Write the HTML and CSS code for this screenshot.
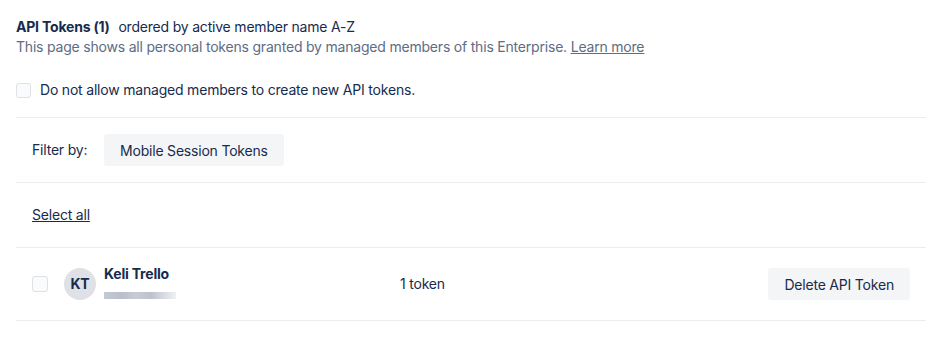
FILE: index.html
```html
<!DOCTYPE html>
<html lang="en">
<head>
    <meta charset="UTF-8">
    <meta name="viewport" content="width=device-width, initial-scale=1.0">
    <title>API Tokens</title>
    <link rel="stylesheet" href="styles.css">
</head>
<body>
    <div class="container">
        <div class="header">
            <div class="title"><strong>API Tokens (1)</strong> ordered by active member name A-Z</div>
            <div class="description">This page shows all personal tokens granted by managed members of this Enterprise. <a href="#">Learn more</a></div>
        </div>

        <label class="restrict">
            <span class="checkbox"></span>
            Do not allow managed members to create new API tokens.
        </label>

        <div class="section filter-row">
            <span class="filter-label">Filter by:</span>
            <button class="btn">Mobile Session Tokens</button>
        </div>

        <div class="section select-row">
            <a href="#">Select all</a>
        </div>

        <div class="section member-row">
            <div class="member">
                <span class="checkbox large"></span>
                <span class="avatar">KT</span>
                <div class="member-info">
                    <div class="member-name">Keli Trello</div>
                    <div class="member-email"></div>
                </div>
            </div>
            <div class="token-count">1 token</div>
            <button class="btn">Delete API Token</button>
        </div>
    </div>
</body>
</html>
```

FILE: styles.css
```css
body {
    margin: 0;
    font-family: Inter, "Noto Sans", sans-serif;
    font-size: 14px;
    line-height: 20px;
    letter-spacing: -0.2px;
    color: #172b4d;
    background-color: white;
}
.container {
    width: 910px;
    padding: 17px 0 0 16px;
}
a {
    color: #172b4d;
    text-decoration: underline;
}
.title strong {
    font-weight: 700;
    margin-right: 5px;
}
.description {
    color: #5e6c84;
}
.description a {
    color: #5e6c84;
}
.restrict {
    display: flex;
    align-items: center;
    gap: 9px;
    margin-top: 23px;
    padding-bottom: 17px;
    border-bottom: 1px solid #ebecf0;
}
.checkbox {
    display: inline-block;
    box-sizing: border-box;
    width: 15px;
    height: 15px;
    border: 1px solid #dfe1e6;
    border-radius: 3px;
    background-color: #fafbfc;
}
.checkbox.large {
    width: 16px;
    height: 16px;
}
.section {
    display: flex;
    align-items: center;
    border-bottom: 1px solid #ebecf0;
    padding: 0 16px;
}
.filter-row {
    padding-top: 16px;
    padding-bottom: 16px;
}
.filter-label {
    width: 72px;
}
.btn {
    height: 32px;
    padding: 0 16px;
    border: none;
    border-radius: 3px;
    background-color: #f4f5f7;
    color: #172b4d;
    font-family: inherit;
    font-size: 14px;
    letter-spacing: -0.2px;
}
.select-row {
    padding-top: 22px;
    padding-bottom: 22px;
}
.member-row {
    padding-top: 20px;
    padding-bottom: 20px;
}
.member {
    display: flex;
    align-items: center;
    width: 368px;
}
.avatar {
    display: flex;
    align-items: center;
    justify-content: center;
    width: 32px;
    height: 32px;
    margin-left: 16px;
    border-radius: 50%;
    background-color: #dfe1e6;
    font-weight: 700;
}
.member-info {
    margin-left: 8px;
    margin-top: -6px;
}
.member-name {
    font-weight: 700;
}
.member-email {
    width: 72px;
    height: 7px;
    margin-top: 8px;
    background: linear-gradient(90deg, #c4c9d2 0%, #b9bfca 25%, #c8ccd4 45%, #bcc2cc 65%, #d6d9df 82%, #f0f1f3 100%);
    filter: blur(0.6px);
}
.token-count {
    flex: 1;
}
```
